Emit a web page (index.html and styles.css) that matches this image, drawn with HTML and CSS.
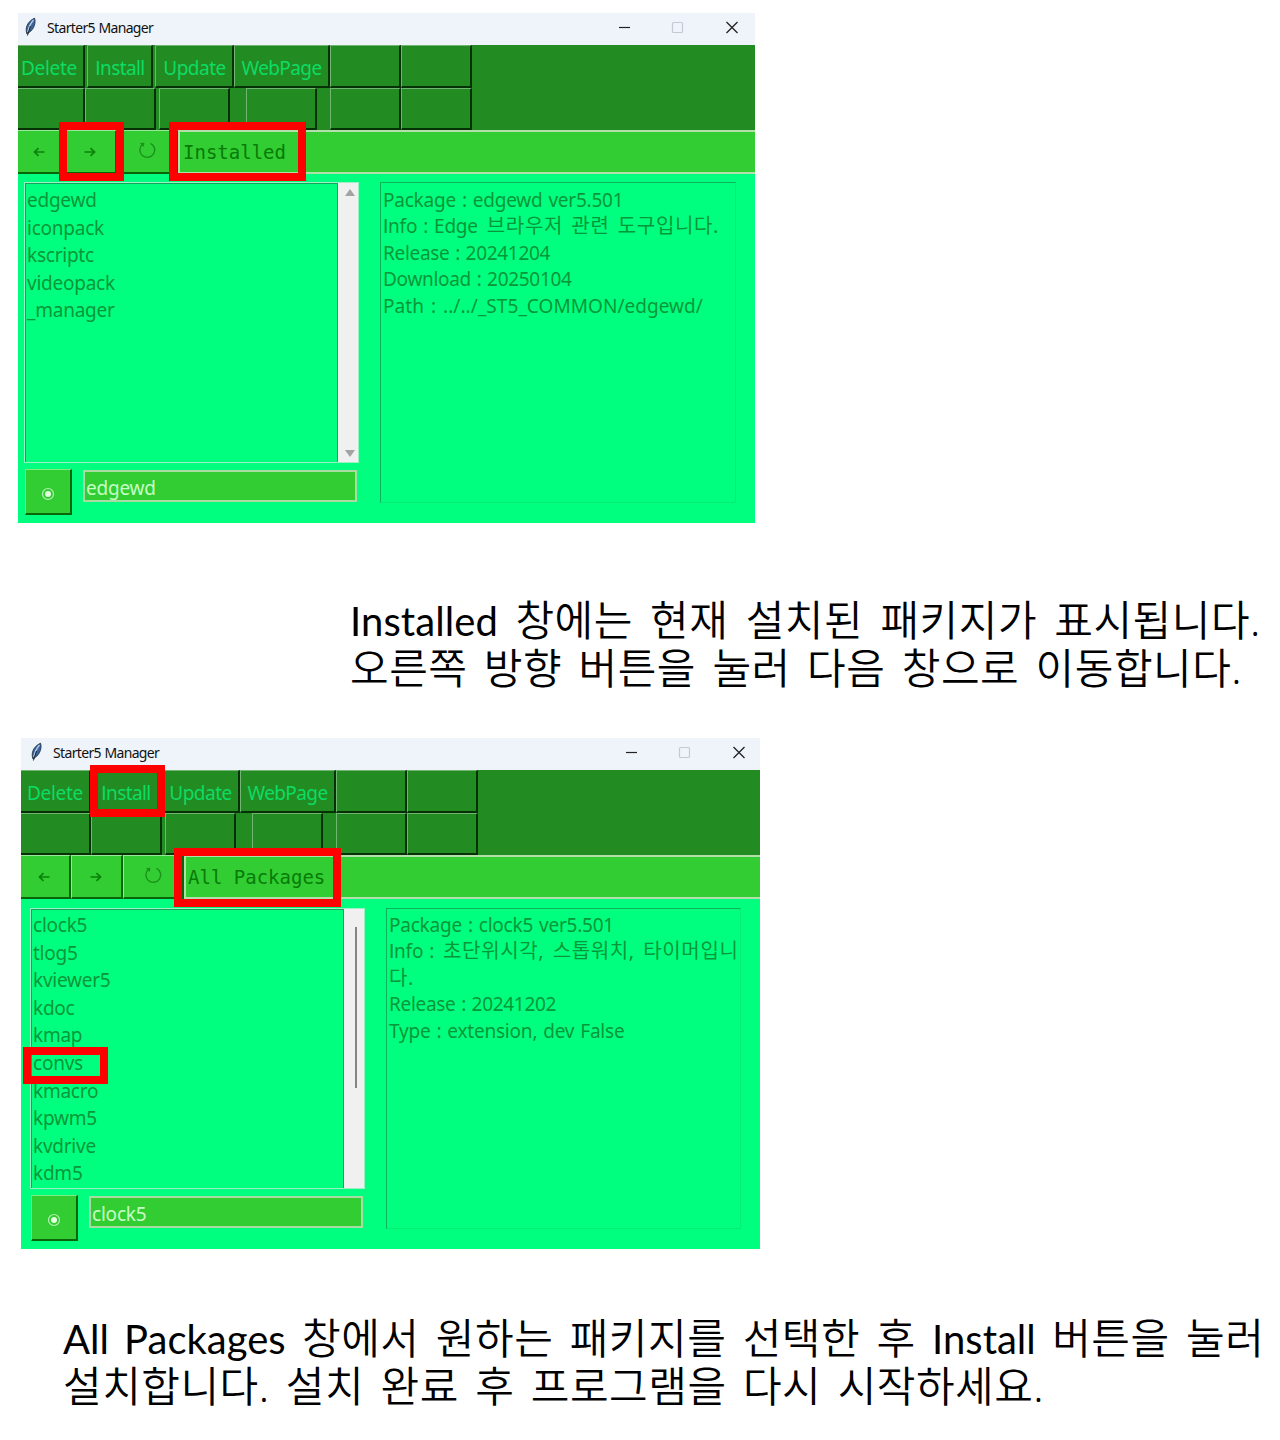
FILE: index.html
```html
<!DOCTYPE html>
<html lang="ko">
<head>
<meta charset="utf-8">
<title>Starter5 Manager</title>
<link rel="stylesheet" href="styles.css">
</head>
<body>
<svg width="0" height="0" class="defs">
  <symbol id="feather" viewBox="0 0 14 20"><path d="M3 17C1 12 2.500 5 10.500 1.200C12 5 10.500 12 5 15.500Z" fill="#3b6496" stroke="#23364f" stroke-width=".9"/><path d="M9.500 3C6 7 4.500 11 3.800 15" fill="none" stroke="#a9c8ec" stroke-width="1.500"/><path d="M6.500 9L3.400 18.500" stroke="#222" stroke-width="1"/></symbol>
  <symbol id="controls" viewBox="0 0 130 16"><path d="M2 8.500H13" stroke="#222" stroke-width="1.200"/><rect x="55.500" y="3.500" width="10" height="10" rx="1" fill="none" stroke="#c6c8d2" stroke-width="1.200"/><path d="M109.500 3L120.500 14M120.500 3L109.500 14" stroke="#222" stroke-width="1.300"/></symbol>
  <symbol id="left" viewBox="0 0 12 10"><path d="M11.500 5H1.500M5.500 1.200L1.500 5L5.500 8.800" fill="none" stroke="#0b8209" stroke-width="1.700"/></symbol>
  <symbol id="right" viewBox="0 0 12 10"><path d="M.5 5H10.500M6.500 1.200L10.500 5L6.500 8.800" fill="none" stroke="#0b8209" stroke-width="1.700"/></symbol>
  <symbol id="reload" viewBox="0 0 18 18"><path d="M12.500 2.300A7.400 7.400 0 1 1 4.500 3.300" fill="none" stroke="#1b921a" stroke-width="1.400"/><path d="M2 2L6.500 1.700L5.500 6Z" fill="#1b921a"/></symbol>
  <symbol id="target" viewBox="0 0 14 14"><circle cx="7" cy="7" r="5.500" fill="none" stroke="#b6f0b4" stroke-width="1.200"/><circle cx="7" cy="7" r="3" fill="#e2ffe0"/></symbol>
</svg>
<main class="page">
  <section class="window first">
    <header class="titlebar"><svg class="feather"><use href="#feather"/></svg><span class="title">Starter5 Manager</span><svg class="controls"><use href="#controls"/></svg></header>
    <div class="tools">
      <div class="btn fill t-delete"><span>Delete</span></div><div class="btn inst t-install"><span><b class="cap">I</b>nstall</span></div><div class="btn fill t-update"><span>Update</span></div><div class="btn fill t-web"><span>WebPage</span></div><div class="btn fill"></div><div class="btn fill"></div>
      <div class="btn fill"></div><div class="btn"></div><div class="btn"></div><div class="btn shift"></div><div class="btn"></div><div class="btn"></div>
    </div>
    <div class="nav">
      <div class="btn"><svg class="arrow"><use href="#left"/></svg></div><div class="btn"><svg class="arrow"><use href="#right"/></svg></div><div class="btn"><svg class="reload"><use href="#reload"/></svg></div><div class="where">Installed</div>
    </div>
    <div class="body">
      <div class="side">
        <div class="listbox"><ul class="list"><li>edgewd</li><li>iconpack</li><li>kscriptc</li><li>videopack</li><li>_manager</li></ul><div class="scroll"><i class="up"></i><i class="down"></i></div></div>
        <div class="pick"><div class="btn go"><svg class="target"><use href="#target"/></svg></div><div class="entry">edgewd</div></div>
      </div>
      <div class="info"><p class="pkg">Package : edgewd ver5.501</p><p class="pkg"><b class="cap">I</b>nfo : Edge <b class="ko">브라우저 관련 도구입니다.</b></p><p class="rel">Release : 20241204</p><p class="rel">Download : 20250104</p><p class="path">Path : ../../_ST5_COMMON/edgewd/</p></div>
    </div>
    <i class="mark m-next"></i><i class="mark m-installed"></i>
  </section>
  <div class="caption one"><p class="lead"><b class="latin">Installed</b> 창에는 현재 설치된 패키지가 표시됩니다.</p><p>오른쪽 방향 버튼을 눌러 다음 창으로 이동합니다.</p></div>
  <section class="window second">
    <header class="titlebar"><svg class="feather"><use href="#feather"/></svg><span class="title">Starter5 Manager</span><svg class="controls"><use href="#controls"/></svg></header>
    <div class="tools">
      <div class="btn fill t-delete"><span>Delete</span></div><div class="btn inst t-install"><span><b class="cap">I</b>nstall</span></div><div class="btn fill t-update"><span>Update</span></div><div class="btn fill t-web"><span>WebPage</span></div><div class="btn fill"></div><div class="btn fill"></div>
      <div class="btn fill"></div><div class="btn"></div><div class="btn"></div><div class="btn shift"></div><div class="btn"></div><div class="btn"></div>
    </div>
    <div class="nav">
      <div class="btn"><svg class="arrow"><use href="#left"/></svg></div><div class="btn"><svg class="arrow"><use href="#right"/></svg></div><div class="btn"><svg class="reload"><use href="#reload"/></svg></div><div class="where">All Packages</div>
    </div>
    <div class="body">
      <div class="side">
        <div class="listbox"><ul class="list"><li>clock5</li><li>tlog5</li><li>kviewer5</li><li>kdoc</li><li>kmap</li><li>convs</li><li>kmacro</li><li>kpwm5</li><li>kvdrive</li><li>kdm5</li></ul><div class="scroll"><i class="thumb"></i></div></div>
        <div class="pick"><div class="btn go"><svg class="target"><use href="#target"/></svg></div><div class="entry">clock5</div></div>
      </div>
      <div class="info"><p class="pkg">Package : clock5 ver5.501</p><p class="pkg"><b class="cap">I</b>nfo : <b class="ko">초단위시각, 스톱워치, 타이머입니</b></p><p><b class="ko wrapped">다.</b></p><p class="rel">Release : 20241202</p><p class="type">Type : extension, dev False</p></div>
    </div>
    <i class="mark m-install"></i><i class="mark m-all"></i><i class="mark m-convs"></i>
  </section>
  <div class="caption two"><p><b class="latin">All Packages</b> 창에서 원하는 패키지를 선택한 후 <b class="latin">Install</b> 버튼을 눌러</p><p>설치합니다. 설치 완료 후 프로그램을 다시 시작하세요.</p></div>
</main>
</body>
</html>
```
FILE: styles.css
```css
* { box-sizing: border-box; }
body { margin: 0; background: #fff; font-family: "Noto Sans", "Noto Sans CJK KR", sans-serif; }
p, ul { margin: 0; padding: 0; list-style: none; }
p, li, span, .where, .entry { white-space: nowrap; }
svg { display: block; flex: none; }
b { font-weight: inherit; line-height: 1; }
.defs { position: absolute; }
.page { width: 1280px; height: 1440px; padding-top: 13px; overflow: hidden; display: flex; flex-direction: column; }

.window { position: relative; flex: none; display: flex; flex-direction: column; background: #00ff7f; }
.first { --crop: 0px; width: 737px; height: 510px; margin-left: 18px; }
.second { --crop: 3px; width: 739px; height: 511px; margin-left: 21px; }

.titlebar { height: 32px; background: #eff3fa; display: flex; align-items: center; padding-left: calc(6px + var(--crop)); }
.feather { width: 14px; height: 20px; margin-top: -4px; }
.title { margin-left: 9px; font-size: 14px; letter-spacing: -.65px; word-spacing: .5px; color: #111; line-height: 20px; margin-top: -3px; }
.controls { width: 130px; height: 16px; margin-left: auto; margin-right: 8px; margin-top: -4px; }
.second .controls { margin-right: 6px; }

.tools { height: 85px; background: #228b22; display: grid; grid-template-columns: calc(67px + var(--crop)) 70px 79px 96px 71px 71px; grid-template-rows: 43px 42px; justify-items: center; align-items: stretch; }
.btn { border: solid; border-width: 1px 2px 2px 1px; border-color: #72b472 #063006 #063006 #72b472; display: flex; align-items: center; justify-content: center; }
.tools .btn { width: 71px; }
.tools .btn.fill { width: 100%; }
.tools .btn.inst { width: 66px; }
.tools .btn:nth-child(6n+1) { border-left: 0; }
.tools .shift { margin-left: -1px; }
.tools span { font-size: 19px; line-height: 24px; color: #0ddc64; letter-spacing: -.3px; margin-top: 3px; }
.cap { font-family: Lato, sans-serif; }
.first .t-delete span { margin-left: -3px; }
.tools .t-install span { letter-spacing: -.6px; margin-left: 1px; }
.tools .t-update span { letter-spacing: -.5px; margin-left: 1px; }
.tools .t-web span { letter-spacing: -.6px; }

.nav { height: 44px; background: #32cd32; display: grid; grid-template-columns: calc(47px + var(--crop)) 51.5px 61.500px 1fr; }
.nav .btn { border-color: #98e698 #0a640a #0a640a #98e698; }
.nav .btn:first-child { border-left: 0; }
.arrow { width: 12px; height: 10px; }
.reload { width: 18px; height: 18px; margin-top: -3px; }
.nav .btn:first-child .arrow { margin-left: -3px; }
.where { border: 2px solid #b2dfaa; border-right: 0; font-family: "DejaVu Sans Mono", monospace; font-size: 19px; line-height: 40px; padding-left: 3px; color: #087b08; }
.second .where { padding-left: 2px; }

.body { flex: 1; display: flex; padding: 8px 19px 0 calc(6px + var(--crop)); }
.second .body { padding-top: 9px; }
.side { width: 335px; margin-right: 21px; flex: none; }
.listbox { height: 281px; border: 1px solid #9bf0c5; display: flex; }
.list { flex: 1; border: solid #16a35a; border-width: 1px 1px 0 1px; padding: 3px 0 0 1px; color: #089738; font-size: 19px; }
.second .list { padding-top: 2px; }
.list li { height: 27.600px; line-height: 27px; letter-spacing: -.24px; }
.scroll { width: 20px; background: #f0f0f0; display: flex; flex-direction: column; align-items: center; justify-content: space-between; padding: 6px 0 5px 3px; }
.up, .down { border: 5px solid transparent; border-top-width: 0; border-bottom: 7px solid #a3a3a3; }
.down { border-bottom-width: 0; border-top: 7px solid #a3a3a3; }
.thumb { width: 2px; height: 161px; background: #858585; margin-top: 12px; }
.pick { display: flex; margin-top: 6px; align-items: flex-start; }
.go { width: 47px; height: 46px; margin-left: 1px; background: #32cd32; border-color: #80ed80 #0b660b #0b660b #80ed80; }
.target { width: 14px; height: 14px; margin-top: 5px; }
.entry { width: 274px; height: 32px; margin: 1px 0 0 11px; border: 2px solid #a9dba3; background: #32cd32; color: #c5ffc5; font-size: 19px; line-height: 32px; padding-left: 1px; letter-spacing: -.2px; }
.info { width: 356px; height: 321px; border: solid; border-width: 1px; border-color: #0bb35a #05ee74 #05ee74 #0bb35a; padding: 4px 0 0 2px; color: #089738; font-size: 19px; }
.second .info { width: 357px; padding-top: 3px; }
.info p { height: 26.400px; line-height: 26px; }
.info .pkg { letter-spacing: -.23px; word-spacing: 1.3px; }
.info .ko { font-size: 20px; letter-spacing: .65px; word-spacing: 2.5px; margin-left: 3px; }
.info .wrapped { margin-left: 0; }
.info .rel { letter-spacing: -.3px; word-spacing: 1px; }
.info .path { letter-spacing: .05px; word-spacing: 2px; }
.info .type { letter-spacing: -.2px; word-spacing: 1.2px; }

.mark { position: absolute; border: 8px solid #f00; }
.m-next { left: 41px; top: 109px; width: 65px; height: 59px; }
.m-installed { left: 151px; top: 109px; width: 137px; height: 59px; }
.m-install { left: 69px; top: 27px; width: 75px; height: 52px; }
.m-all { left: 153px; top: 110px; width: 167px; height: 59px; }
.m-convs { left: 2px; top: 309px; width: 85px; height: 37px; }

.caption { flex: none; color: #000; font-size: 42px; font-weight: 350; letter-spacing: .5px; word-spacing: 5px; }
.caption p { height: 48px; line-height: 48px; }
.caption .lead { word-spacing: 5.900px; }
.caption .latin { font-family: Lato, sans-serif; font-weight: 400; font-size: 40px; letter-spacing: 0; }
.caption .lead .latin { letter-spacing: .1px; }
.one { margin: 73px 0 46px 350px; height: 96px; }
.two { margin: 65px 0 0 63px; }
```
